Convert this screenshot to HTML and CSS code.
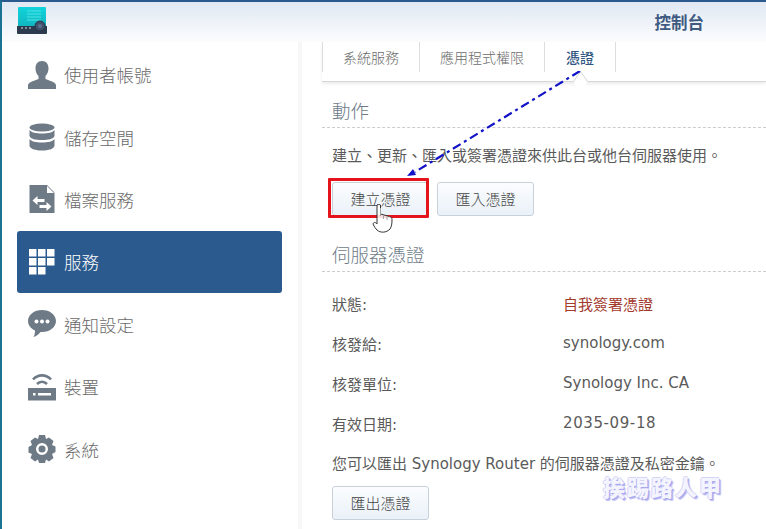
FILE: index.html
```html
<!DOCTYPE html>
<html lang="zh-Hant">
<head>
<meta charset="utf-8">
<title>控制台</title>
<link rel="stylesheet" href="styles.css">
</head>
<body>
<div class="window">
  <header class="topbar">
    <svg class="logo" width="32" height="30" viewBox="0 0 32 30">
      <defs><linearGradient id="lg" x1="0" y1="0" x2="0" y2="1"><stop offset="0" stop-color="#12d4dc"/><stop offset="1" stop-color="#0fb3bd"/></linearGradient></defs>
      <path d="M2 1h26a1 1 0 0 1 1 1v20H1V2a1 1 0 0 1 1-1z" fill="url(#lg)"/>
      <path d="M10 5h14M10 8h14M10 11h14M10 14h14" stroke="#4fe3e6" stroke-width="1"/>
      <path d="M0 20h30v7a1 1 0 0 1-1 1H1a1 1 0 0 1-1-1z" fill="#2b3a4c"/>
      <circle cx="23" cy="20" r="5" fill="#3f5068" stroke="#26364a"/>
      <circle cx="23" cy="20" r="2" fill="#5d7090"/>
      <circle cx="5" cy="22" r="1" fill="#9aa7b5"/><circle cx="9" cy="22" r="1" fill="#9aa7b5"/><circle cx="13" cy="22" r="1" fill="#9aa7b5"/>
    </svg>
    <h1 class="title">控制台</h1>
  </header>
  <div class="body">
    <nav class="sidebar">
      <a class="nav-item">
        <svg class="nav-icon" viewBox="0 0 28 28"><path d="M14 0c4.200 0 6.500 3 6.500 7.500 0 3-1.200 5.500-3 7.500v3c3 1.500 9.500 2.500 10.500 6v4.500H0V24c1-3.500 7.500-4.500 10.500-6v-3c-1.800-2-3-4.500-3-7.500C7.500 3 9.800 0 14 0z"/></svg>
        <span>使用者帳號</span>
      </a>
      <a class="nav-item">
        <svg class="nav-icon" viewBox="0 0 28 28"><ellipse cx="14" cy="4.500" rx="12.500" ry="4"/><path d="M1.500 7c1.500 2.500 6.500 3.500 12.500 3.500S25 9.500 26.500 7v6c-1 3-6 4-12.500 4S2.500 16 1.500 13z"/><path d="M1.500 16c1.500 2.500 6.500 3.500 12.500 3.500s11-1 12.500-3.500v7c-1 3-6 4.500-12.500 4.500S2.500 26 1.500 23z"/></svg>
        <span>儲存空間</span>
      </a>
      <a class="nav-item">
        <svg class="nav-icon" viewBox="0 0 28 28"><path fill-rule="evenodd" d="M1.500 0H19l7.500 7.500V28H1.500zM19 1v7h7z"/><path d="M4.500 15.500l5-4.500v3h7v3h-7v3zM23.500 21.500l-5-4.500v3h-7v3h7v3z" fill="#fff"/></svg>
        <span>檔案服務</span>
      </a>
      <a class="nav-item active">
        <svg class="nav-icon" viewBox="0 0 28 28"><path d="M1 1h7.500v7.500H1zM10 1h7.500v7.500H10zM19 1h7.500v7.500H19zM1 10h7.500v7.500H1zM10 10h7.500v7.500H10zM19 10h7.500v7.500H19zM1 19h7.500v7.500H1zM10 19h7.500v7.500H10z"/></svg>
        <span>服務</span>
      </a>
      <a class="nav-item">
        <svg class="nav-icon" viewBox="0 0 28 28"><path d="M14 0c7.700 0 14 4.800 14 11s-6.300 11-14 11h-1.500c-1.500 2-4 4.500-7 5 1-1.500 1.500-4 1.500-6.500C2.800 18.500 0 15 0 11 0 4.800 6.300 0 14 0z"/><circle cx="8.500" cy="11.500" r="2" fill="#fff"/><circle cx="14" cy="11.500" r="2" fill="#fff"/><circle cx="19.500" cy="11.500" r="2" fill="#fff"/></svg>
        <span>通知設定</span>
      </a>
      <a class="nav-item">
        <svg class="nav-icon" viewBox="0 0 28 28"><path d="M0 15h28v12.500H0z"/><rect x="5" y="20" width="2.500" height="2.500" fill="#fff"/><rect x="10" y="20" width="13" height="2.500" fill="#fff"/><path d="M5 6.500C10 1 18 1 23 6.500M9 11c3-3 7-3 10 0" fill="none" stroke="#6f7a87" stroke-width="2.600"/></svg>
        <span>裝置</span>
      </a>
      <a class="nav-item">
        <svg class="nav-icon" viewBox="0 0 28 28"><path fill-rule="evenodd" d="M11 0h6l1 4 3-1.500 4.500 3.500-1.500 4 3.500 1.500v5.500L24 19l1.500 4-4.500 3.500-3-2-1 3.500h-6l-1-3.500-3 2L2.500 23 4 19 .5 17.500V12L4 10 2.500 6 7 2.500 10 4zM14 8a6 6 0 1 0 0 12 6 6 0 0 0 0-12z"/><circle cx="14" cy="14" r="3.500"/></svg>
        <span>系統</span>
      </a>
    </nav>
    <main class="content">
      <div class="tabs">
        <div class="tab">系統服務</div>
        <div class="tab">應用程式權限</div>
        <div class="tab current">憑證</div>
      </div>
      <section class="pane">
        <h2 class="section-title">動作</h2>
        <p class="line">建立、更新、匯入或簽署憑證來供此台或他台伺服器使用。</p>
        <div class="actions">
          <button class="btn">建立憑證</button>
          <button class="btn">匯入憑證</button>
        </div>
        <h2 class="section-title second">伺服器憑證</h2>
        <dl class="facts">
          <div class="fact"><dt>狀態:</dt><dd class="warn">自我簽署憑證</dd></div>
          <div class="fact"><dt>核發給:</dt><dd>synology.com</dd></div>
          <div class="fact"><dt>核發單位:</dt><dd>Synology Inc. CA</dd></div>
          <div class="fact"><dt>有效日期:</dt><dd class="date">2035-09-18</dd></div>
        </dl>
        <p class="line export">您可以匯出 Synology Router 的伺服器憑證及私密金鑰。</p>
        <button class="btn">匯出憑證</button>
      </section>
    </main>
  </div>
  <div class="highlight"></div>
  <svg class="arrow" width="190" height="110" viewBox="0 0 190 110">
    <path d="M174 0L9 101" fill="none" stroke="#1212c8" stroke-width="2.200" stroke-dasharray="9 4 3 4"/>
    <path d="M1 105l6-7 3 6z" fill="#1212c8"/>
  </svg>
  <svg class="cursor" width="24" height="30" viewBox="0 0 24 30">
    <path d="M6 1c1-1 3-1 3.500 0v9l9 2.500c1.500.5 2.500 1 2.500 3 0 5-.5 7-2 9.500-3.500 4-10 4-13 1-1.500-1.500-3-3.500-4-6 .5-2 2.500-2 4 0V2z" fill="#fff" fill-opacity=".85" stroke="#333" stroke-width="1"/>
    <path d="M9.500 4v8M12.500 11v4M16 12v4" stroke="#a0a0a0" stroke-width="1" fill="none"/>
  </svg>
  <div class="watermark">挨踢路人甲</div>
</div>
</body>
</html>
```
FILE: styles.css
```css
* { box-sizing: border-box; }
html, body { margin: 0; padding: 0; }
body { font-family: "DejaVu Sans", "Noto Sans CJK TC", sans-serif; color: #5a5a5a; background: #fff; }
.window { position: relative; width: 766px; height: 529px; overflow: hidden; border-top: 2px solid #2b5a8e; border-left: 2px solid #1a7393; display: flex; flex-direction: column; }
.topbar { flex: 0 0 40px; display: flex; align-items: center; justify-content: space-between; padding: 0 62px 0 15px; background: linear-gradient(#e1e8f3, #fbfcfe); }
.logo { display: block; margin-top: -2px; }
.title { margin: 0; font-size: 16.500px; font-weight: 700; color: #3f5a80; font-family: "Noto Sans CJK TC", sans-serif; }
.body { flex: 1; display: flex; min-height: 0; }
.sidebar { flex: 0 0 300px; padding: 1.500px 16px 0 15px; display: flex; flex-direction: column; border-right: 4px solid #f7f7f7; }
.nav-item { height: 62.400px; flex: none; padding-left: 11px; display: flex; align-items: center; gap: 8px; border-radius: 3px; font-family: "Noto Sans CJK TC", sans-serif; font-size: 17.500px; font-weight: 300; color: #6a6a6a; }
.nav-icon { width: 28px; height: 28px; fill: #6f7a87; flex: none; }
.nav-item.active { background: #2b5a8e; color: #fff; }
.nav-item.active .nav-icon { fill: #fff; }
.content { flex: 1; padding: 0 0 0 20px; min-width: 0; }
.tabs { position: relative; display: flex; height: 40px; border-bottom: 1px solid #d8d8d8; box-shadow: 0 2px 3px rgba(0,0,0,.08); align-items: flex-start; }
.tab { position: relative; height: 30px; display: flex; align-items: center; justify-content: center; font-family: "Noto Sans CJK TC", sans-serif; font-size: 14px; font-weight: 300; color: #6c6c6c; border-right: 1px solid #ddd; padding: 0 20px; }
.tab:first-child { border-left: 1px solid #ddd; }
.tab.current { color: #2f5580; font-weight: 500; padding: 0 21px; }
.tab.current::after { content: ""; position: absolute; left: 29px; top: 33px; width: 12px; height: 12px; background: #fff; border-top: 1px solid #d8d8d8; border-left: 1px solid #d8d8d8; transform: rotate(45deg) skew(10deg, 10deg); }
.pane { padding-left: 10px; }
.section-title { margin: 0 0 0 -10px; padding: 16px 0 6px 10px; height: 46px; font-size: 18.500px; font-weight: 300; line-height: 24px; color: #6e7b88; border-bottom: 1px dashed #ccc; font-family: "Noto Sans CJK TC", sans-serif; }
.section-title.second { padding-top: 10px; height: 40px; }
.line { margin: 0; font-size: 15px; line-height: 20px; padding-top: 18px; }
.actions { display: flex; gap: 8px; padding: 16px 0 16px; }
.btn { display: block; width: 97px; height: 34px; padding: 0 0 2px; font-size: 15px; font-weight: 300; font-family: "Noto Sans CJK TC", sans-serif; color: #444; background: linear-gradient(#fbfdff, #eaf1f8); border: 1px solid #c8d1da; border-radius: 3px; }
.facts { margin: 0; padding-top: 11px; }
.fact { display: flex; height: 40px; align-items: center; font-size: 15px; }
.fact dt { width: 231px; }
.fact dd { margin: 0; }
.fact .date { letter-spacing: .6px; }
.warn { color: #a33a2e; }
.line.export { padding: 0 0 1px; height: 43px; display: flex; align-items: center; white-space: pre; }
.highlight { position: absolute; left: 326px; top: 176px; width: 101px; height: 40px; border: 3px solid #e5141c; border-radius: 1px; }
.arrow { position: absolute; left: 404px; top: 69px; }
.cursor { position: absolute; left: 369px; top: 202px; }
.watermark { position: absolute; left: 601px; top: 469px; font-family: "Noto Sans CJK TC", sans-serif; font-weight: 900; font-size: 22px; letter-spacing: 2px; line-height: 30px; color: #f4f4ff; text-shadow: 1px 1px 0 #a8a8ee, -1px 0 0 #d4d4f6, 0 -1px 0 #d4d4f6, 2px 2px 1px #b8b8f2; }
```
